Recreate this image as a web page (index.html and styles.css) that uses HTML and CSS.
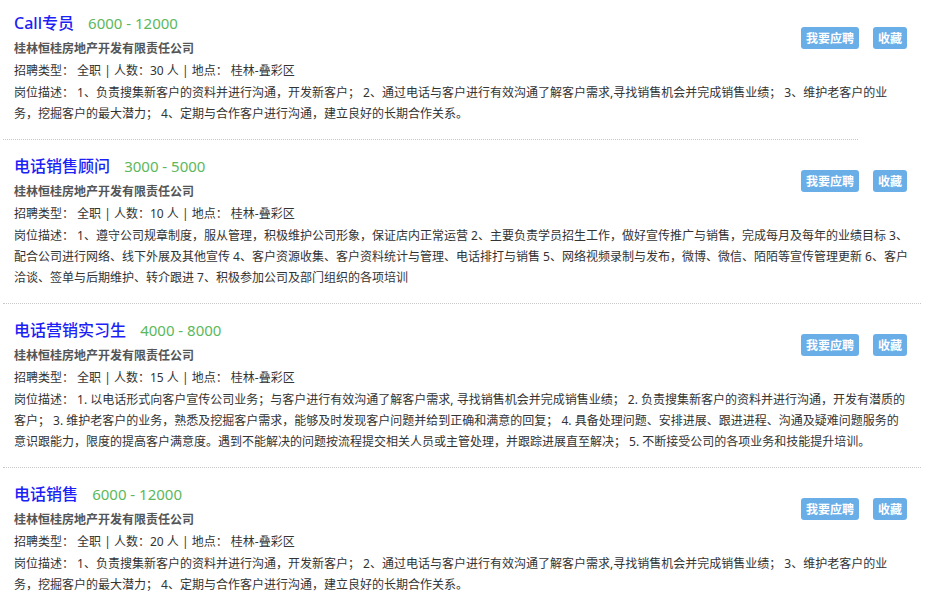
FILE: index.html
```html
<!DOCTYPE html>
<html lang="zh-CN">
<head>
    <meta charset="UTF-8">
    <meta name="viewport" content="width=device-width, initial-scale=1.0">
    <title>职位列表</title>
    <link rel="stylesheet" href="styles.css">
</head>
<body>
    <div class="job-list">
        <div class="job">
            <div class="job-actions">
                <button class="btn">我要应聘</button>
                <button class="btn">收藏</button>
            </div>
            <div class="job-title">
                <a class="job-name" href="#">Call专员</a>
                <span class="job-salary">6000 - 12000</span>
            </div>
            <div class="job-company">桂林恒桂房地产开发有限责任公司</div>
            <div class="job-info">招聘类型： 全职 | 人数：30 人 | 地点： 桂林-叠彩区</div>
            <div class="job-desc">岗位描述： 1、负责搜集新客户的资料并进行沟通，开发新客户； 2、通过电话与客户进行有效沟通了解客户需求,寻找销售机会并完成销售业绩； 3、维护老客户的业务，挖掘客户的最大潜力； 4、定期与合作客户进行沟通，建立良好的长期合作关系。</div>
        </div>
        <div class="divider divider-short"></div>

        <div class="job">
            <div class="job-actions">
                <button class="btn">我要应聘</button>
                <button class="btn">收藏</button>
            </div>
            <div class="job-title">
                <a class="job-name" href="#">电话销售顾问</a>
                <span class="job-salary">3000 - 5000</span>
            </div>
            <div class="job-company">桂林恒桂房地产开发有限责任公司</div>
            <div class="job-info">招聘类型： 全职 | 人数：10 人 | 地点： 桂林-叠彩区</div>
            <div class="job-desc">岗位描述： 1、遵守公司规章制度，服从管理，积极维护公司形象，保证店内正常运营 2、主要负责学员招生工作，做好宣传推广与销售，完成每月及每年的业绩目标 3、配合公司进行网络、线下外展及其他宣传 4、客户资源收集、客户资料统计与管理、电话排打与销售 5、网络视频录制与发布，微博、微信、陌陌等宣传管理更新 6、客户洽谈、签单与后期维护、转介跟进 7、积极参加公司及部门组织的各项培训</div>
        </div>
        <div class="divider"></div>

        <div class="job">
            <div class="job-actions">
                <button class="btn">我要应聘</button>
                <button class="btn">收藏</button>
            </div>
            <div class="job-title">
                <a class="job-name" href="#">电话营销实习生</a>
                <span class="job-salary">4000 - 8000</span>
            </div>
            <div class="job-company">桂林恒桂房地产开发有限责任公司</div>
            <div class="job-info">招聘类型： 全职 | 人数：15 人 | 地点： 桂林-叠彩区</div>
            <div class="job-desc">岗位描述： 1. 以电话形式向客户宣传公司业务；与客户进行有效沟通了解客户需求, 寻找销售机会并完成销售业绩； 2. 负责搜集新客户的资料并进行沟通，开发有潜质的客户； 3. 维护老客户的业务，熟悉及挖掘客户需求，能够及时发现客户问题并给到正确和满意的回复； 4. 具备处理问题、安排进展、跟进进程、沟通及疑难问题服务的意识跟能力，限度的提高客户满意度。遇到不能解决的问题按流程提交相关人员或主管处理，并跟踪进展直至解决； 5. 不断接受公司的各项业务和技能提升培训。</div>
        </div>
        <div class="divider"></div>

        <div class="job">
            <div class="job-actions">
                <button class="btn">我要应聘</button>
                <button class="btn">收藏</button>
            </div>
            <div class="job-title">
                <a class="job-name" href="#">电话销售</a>
                <span class="job-salary">6000 - 12000</span>
            </div>
            <div class="job-company">桂林恒桂房地产开发有限责任公司</div>
            <div class="job-info">招聘类型： 全职 | 人数：20 人 | 地点： 桂林-叠彩区</div>
            <div class="job-desc">岗位描述： 1、负责搜集新客户的资料并进行沟通，开发新客户； 2、通过电话与客户进行有效沟通了解客户需求,寻找销售机会并完成销售业绩； 3、维护老客户的业务，挖掘客户的最大潜力； 4、定期与合作客户进行沟通，建立良好的长期合作关系。</div>
        </div>
        <div class="divider"></div>
    </div>
</body>
</html>
```

FILE: styles.css
```css
/* General */
body {
    margin: 0;
    font-family: "Noto Sans", "Noto Sans CJK SC", sans-serif;
    font-size: 12px;
    color: #333;
    background: #fff;
}

.job-list {
    width: 918px;
    margin-left: 3px;
}

/* Job item */
.job {
    padding: 10px 12px 15px 11px;
}

.job-actions {
    float: right;
    display: flex;
    gap: 14px;
    margin-top: 17px;
    margin-right: 2px;
}

.btn {
    height: 22px;
    padding: 0 5px;
    border: none;
    border-radius: 3px;
    background-color: #6aaee8;
    color: #fff;
    font-family: inherit;
    font-size: 12px;
    font-weight: bold;
    cursor: pointer;
}

.btn:hover {
    background-color: #4e9ade;
}

.job-title {
    line-height: 26px;
}

.job-name {
    font-size: 16px;
    font-weight: 500;
    color: #1c22f5;
    text-decoration: none;
    margin-right: 11px;
}

.job-salary {
    font-size: 15px;
    color: #5cb85c;
}

.job-company {
    line-height: 22px;
    font-weight: bold;
    color: #555;
}

.job-info {
    line-height: 22px;
}

.job-desc {
    line-height: 21px;
}

.divider {
    border-bottom: 1px dotted #c8c8c8;
    margin-bottom: 3px;
}

.divider-short {
    width: 855px;
}
```
